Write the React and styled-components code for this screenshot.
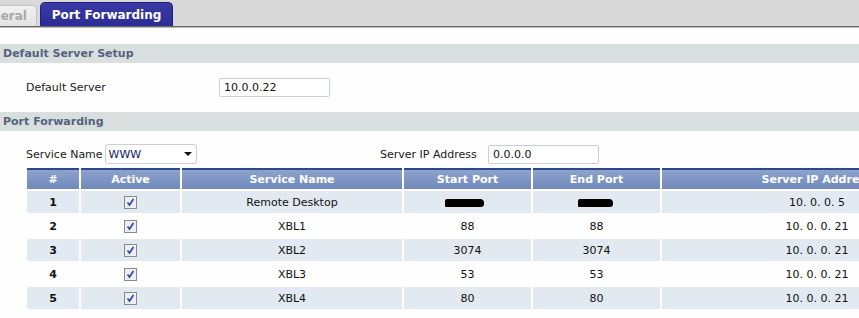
import styled, { createGlobalStyle } from "styled-components";

const GlobalStyle = createGlobalStyle`
	body {
		margin: 0;
		background: #fdfefd;
		font-family: "DejaVu Sans", Verdana, sans-serif;
		font-size: 11px;
		color: #1a1a1a;
		overflow: hidden;
	}
`;

const Page = styled.div`
	width: 859px;
	height: 318px;
	overflow: hidden;
`;

const TabBar = styled.div`
	display: flex;
	align-items: flex-end;
	gap: 3px;
	height: 26px;
	background: #d9d9d9;
	border-bottom: 1px solid #6c6c6c;
	box-shadow: 0 1px 0 #b8b8b8;
	margin-bottom: 17px;
`;

const Tab = styled.div`
	display: flex;
	align-items: center;
	justify-content: ${(p) => (p.$active ? "center" : "flex-end")};
	height: ${(p) => (p.$active ? "24px" : "21px")};
	width: ${(p) => (p.$active ? "133px" : "37px")};
	padding-right: ${(p) => (p.$active ? "0" : "9px")};
	box-sizing: border-box;
	border: 1px solid ${(p) => (p.$active ? "#1f1f78" : "#c4c4c4")};
	border-bottom: none;
	border-left: ${(p) => (p.$active ? "1px solid #1f1f78" : "none")};
	border-radius: ${(p) => (p.$active ? "5px 5px 0 0" : "0 5px 0 0")};
	background: ${(p) =>
		p.$active
			? "linear-gradient(#3a3aa6, #2c2c96)"
			: "linear-gradient(#f2f2f2, #e2e2e2)"};
	color: ${(p) => (p.$active ? "#ffffff" : "#a8a8a8")};
	font-weight: bold;
	font-size: 12px;
`;

const SectionBand = styled.div`
	display: flex;
	align-items: center;
	height: 19px;
	padding-left: 3px;
	background: #d8dfde;
	color: #56627e;
	font-weight: bold;
	font-size: 11px;
`;

const FieldRow = styled.div`
	display: flex;
	align-items: center;
	padding: 15px 0 15px 26px;
`;

const Label = styled.span`
	width: ${(p) => p.$width || "auto"};
	flex: none;
`;

const TextInput = styled.div`
	display: flex;
	align-items: center;
	width: 111px;
	height: 19px;
	box-sizing: border-box;
	padding-left: 4px;
	border: 1px solid #c9cfd2;
	border-radius: 2px;
	background: #fff;
	color: #111;
`;

const FilterRow = styled.div`
	display: grid;
	grid-template-columns: 354px 1fr;
	align-items: center;
	padding: 13px 0 2px 26px;
`;

const Group = styled.div`
	display: flex;
	align-items: center;
	gap: 2px;
`;

const Select = styled.div`
	display: flex;
	align-items: center;
	justify-content: space-between;
	width: 92px;
	height: 20px;
	box-sizing: border-box;
	padding: 0 4px 0 3px;
	border: 1px solid #c9cfd2;
	border-radius: 3px;
	background: #fff;
	color: #10206a;
	font-size: 11px;
`;

const Arrow = styled.span`
	width: 0;
	height: 0;
	border-left: 4px solid transparent;
	border-right: 4px solid transparent;
	border-top: 4px solid #111;
`;

const Table = styled.table`
	margin-left: 25px;
	border-spacing: 2px;
	table-layout: fixed;
	width: 949px;
`;

const Th = styled.th`
	height: 19px;
	padding: 0;
	border-top: 2px solid #2b4a8a;
	background: linear-gradient(#8ea3cc, #6f89bb);
	color: #fff;
	font-weight: bold;
	font-size: 11px;
	text-align: center;
	width: ${(p) => p.$w}px;
`;

const Td = styled.td`
	height: 22px;
	padding: 0;
	text-align: center;
	font-size: 11px;
	font-weight: ${(p) => (p.$bold ? "bold" : "normal")};
	background: ${(p) => (p.$shade ? "#e3e9f1" : "transparent")};
	color: #111;
`;

const Check = styled.span`
	display: inline-flex;
	align-items: center;
	justify-content: center;
	width: 13px;
	height: 13px;
	box-sizing: border-box;
	border: 1px solid #8a8a8a;
	background: #eceef2;
	vertical-align: middle;
`;

const Redacted = styled.span`
	display: inline-block;
	width: ${(p) => p.$w}px;
	height: 8px;
	background: #000;
	border-radius: 2px 4px 3px 1px;
	vertical-align: middle;
	margin-left: ${(p) => p.$shift}px;
`;

const columns = [
	{ label: "#", w: 52 },
	{ label: "Active", w: 99 },
	{ label: "Service Name", w: 220 },
	{ label: "Start Port", w: 127 },
	{ label: "End Port", w: 127 },
	{ label: "Server IP Address", w: 310 },
];

const rules = [
	{ name: "Remote Desktop", start: null, end: null, ip: "10. 0. 0. 5" },
	{ name: "XBL1", start: "88", end: "88", ip: "10. 0. 0. 21" },
	{ name: "XBL2", start: "3074", end: "3074", ip: "10. 0. 0. 21" },
	{ name: "XBL3", start: "53", end: "53", ip: "10. 0. 0. 21" },
	{ name: "XBL4", start: "80", end: "80", ip: "10. 0. 0. 21" },
];

const CheckMark = () => (
	<Check>
		<svg width="9" height="9" viewBox="0 0 9 9">
			<path d="M1.5 4.5 L3.5 7 L7.5 1" stroke="#3048a0" strokeWidth="1.7" fill="none" />
		</svg>
	</Check>
);

const App = () => {
	return (
		<Page>
			<GlobalStyle />
			<TabBar>
				<Tab>eral</Tab>
				<Tab $active>Port Forwarding</Tab>
			</TabBar>

			<SectionBand>Default Server Setup</SectionBand>
			<FieldRow>
				<Label $width="193px">Default Server</Label>
				<TextInput>10.0.0.22</TextInput>
			</FieldRow>

			<SectionBand>Port Forwarding</SectionBand>
			<FilterRow>
				<Group>
					<Label>Service Name</Label>
					<Select>
						WWW
						<Arrow />
					</Select>
				</Group>
				<Group>
					<Label $width="106px">Server IP Address</Label>
					<TextInput>0.0.0.0</TextInput>
				</Group>
			</FilterRow>

			<Table>
				<thead>
					<tr>
						{columns.map((c) => (
							<Th key={c.label} $w={c.w}>
								{c.label}
							</Th>
						))}
					</tr>
				</thead>
				<tbody>
					{rules.map((r, i) => {
						const shade = i % 2 === 0;
						return (
							<tr key={r.name}>
								<Td $bold $shade={shade}>{i + 1}</Td>
								<Td $shade={shade}>
									<CheckMark />
								</Td>
								<Td $shade={shade}>{r.name}</Td>
								<Td $shade={shade}>
									{r.start ?? <Redacted $w={39} $shift={-6} />}
								</Td>
								<Td $shade={shade}>
									{r.end ?? <Redacted $w={35} $shift={-2} />}
								</Td>
								<Td $shade={shade}>{r.ip}</Td>
							</tr>
						);
					})}
				</tbody>
			</Table>
		</Page>
	);
};

export default App;
